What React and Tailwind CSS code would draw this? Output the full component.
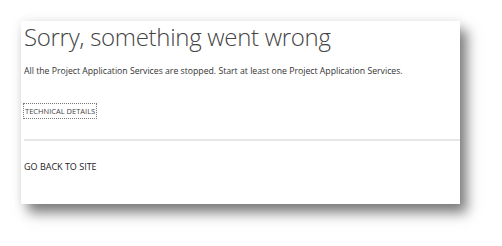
export default function App() {
  return (
    <div className="w-[502px] h-[246px] bg-white pl-[21px] pt-[21px] font-['Open_Sans','Liberation_Sans',sans-serif]">
      <div className="w-[439px] h-[183px] bg-white shadow-[7px_9px_12px_rgba(0,0,0,0.5),0_0_10px_rgba(0,0,0,0.08)] flex flex-col pl-[3px]">
        <h1 className="mt-[1px] text-[24px] leading-[30px] font-light text-[#444] tracking-[-0.3px]">
          Sorry, something went wrong
        </h1>
        <p className="mt-[13px] text-[8.7px] leading-[12px] text-[#333]">
          All the Project Application Services are stopped. Start at least one Project Application Services.
        </p>
        <div className="mt-[27px] flex">
          <span className="text-[7.5px] leading-[12px] text-[#444] outline-1 outline-dotted outline-[#777] px-[1px] py-[1px]">
            TECHNICAL DETAILS
          </span>
        </div>
        <div className="mt-[21px] h-[2px] bg-[#e6e6e6]" />
        <div className="mt-[20px] text-[9px] leading-[12px] text-[#222]">GO BACK TO SITE</div>
      </div>
    </div>
  );
}
